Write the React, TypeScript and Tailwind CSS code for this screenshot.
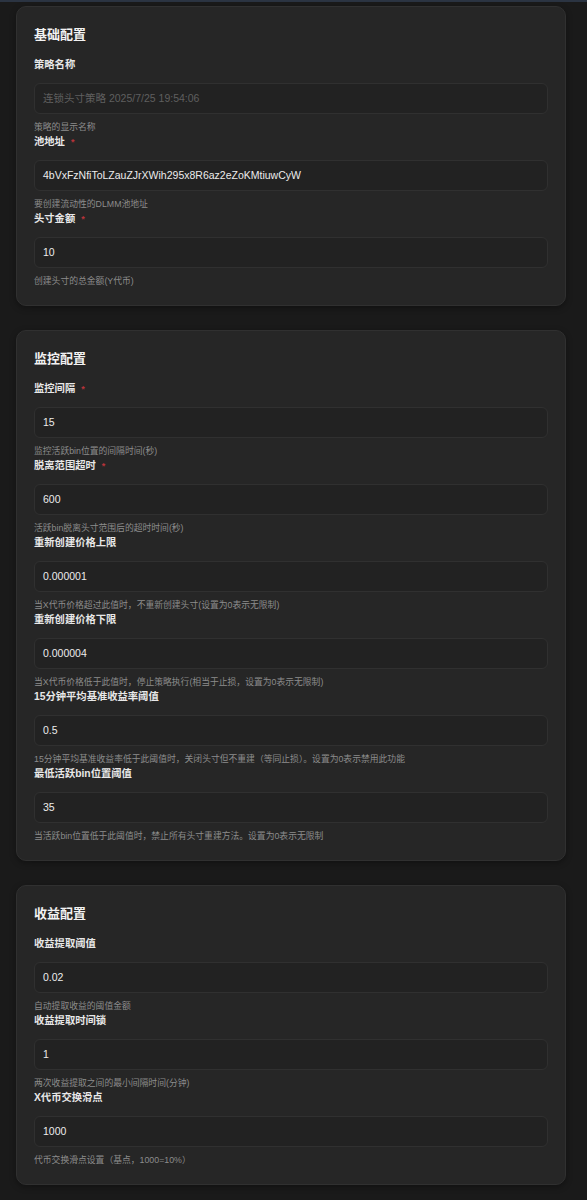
import React from "react";

type Field = {
  label: string;
  required?: boolean;
  value: string;
  placeholder?: boolean;
  desc: string;
};

type Section = { title: string; fields: Field[] };

const sections: Section[] = [
  {
    title: "基础配置",
    fields: [
      { label: "策略名称", value: "连锁头寸策略 2025/7/25 19:54:06", placeholder: true, desc: "策略的显示名称" },
      { label: "池地址", required: true, value: "4bVxFzNfiToLZauZJrXWih295x8R6az2eZoKMtiuwCyW", desc: "要创建流动性的DLMM池地址" },
      { label: "头寸金额", required: true, value: "10", desc: "创建头寸的总金额(Y代币)" },
    ],
  },
  {
    title: "监控配置",
    fields: [
      { label: "监控间隔", required: true, value: "15", desc: "监控活跃bin位置的间隔时间(秒)" },
      { label: "脱离范围超时", required: true, value: "600", desc: "活跃bin脱离头寸范围后的超时时间(秒)" },
      { label: "重新创建价格上限", value: "0.000001", desc: "当X代币价格超过此值时，不重新创建头寸(设置为0表示无限制)" },
      { label: "重新创建价格下限", value: "0.000004", desc: "当X代币价格低于此值时，停止策略执行(相当于止损，设置为0表示无限制)" },
      { label: "15分钟平均基准收益率阈值", value: "0.5", desc: "15分钟平均基准收益率低于此阈值时，关闭头寸但不重建（等同止损）。设置为0表示禁用此功能" },
      { label: "最低活跃bin位置阈值", value: "35", desc: "当活跃bin位置低于此阈值时，禁止所有头寸重建方法。设置为0表示无限制" },
    ],
  },
  {
    title: "收益配置",
    fields: [
      { label: "收益提取阈值", value: "0.02", desc: "自动提取收益的阈值金额" },
      { label: "收益提取时间锁", value: "1", desc: "两次收益提取之间的最小间隔时间(分钟)" },
      { label: "X代币交换滑点", value: "1000", desc: "代币交换滑点设置（基点，1000=10%）" },
    ],
  },
];

const font = { fontFamily: '"Liberation Sans", "Noto Sans CJK SC", sans-serif' };

function FieldRow({ f }: { f: Field }) {
  return (
    <div className="flex flex-col">
      <div className="flex items-center h-[16px] text-[10.3px] font-bold text-[#e8e8e8] leading-[16px]">
        <span>{f.label}</span>
        {f.required && <span className="ml-[6px] text-[9px] text-[#b8333a] leading-none">*</span>}
      </div>
      <div className="mt-[10px] h-[31px] rounded-[6px] border border-[#303030] bg-[#222222] flex items-center pl-[8px]">
        <span className={`text-[10.5px] ${f.placeholder ? "text-[#5f5f5f]" : "text-[#ececec]"}`}>{f.value}</span>
      </div>
      <div className="mt-[7px] h-[13px] text-[8.8px] leading-[13px] text-[#8c8c8c] whitespace-nowrap">{f.desc}</div>
    </div>
  );
}

export default function App() {
  return (
    <div className="min-h-[1200px] bg-[#1a1a1a]" style={font}>
      <div className="h-[2px] bg-[#2b3442]" />
      <div className="pl-[16px] pt-[4px] flex flex-col gap-[24px]">
        {sections.map((s) => (
          <div
            key={s.title}
            className="w-[550px] rounded-[10px] border border-[#303030] bg-[#262626] px-[17px] pt-[18px] pb-[17px] shadow-[0_2px_6px_rgba(0,0,0,0.35)]"
          >
            <div className="h-[20px] leading-[20px] text-[13px] font-bold text-[#f2f2f2]">{s.title}</div>
            <div className="mt-[12px] flex flex-col">
              {s.fields.map((f) => (
                <FieldRow key={f.label} f={f} />
              ))}
            </div>
          </div>
        ))}
      </div>
    </div>
  );
}
